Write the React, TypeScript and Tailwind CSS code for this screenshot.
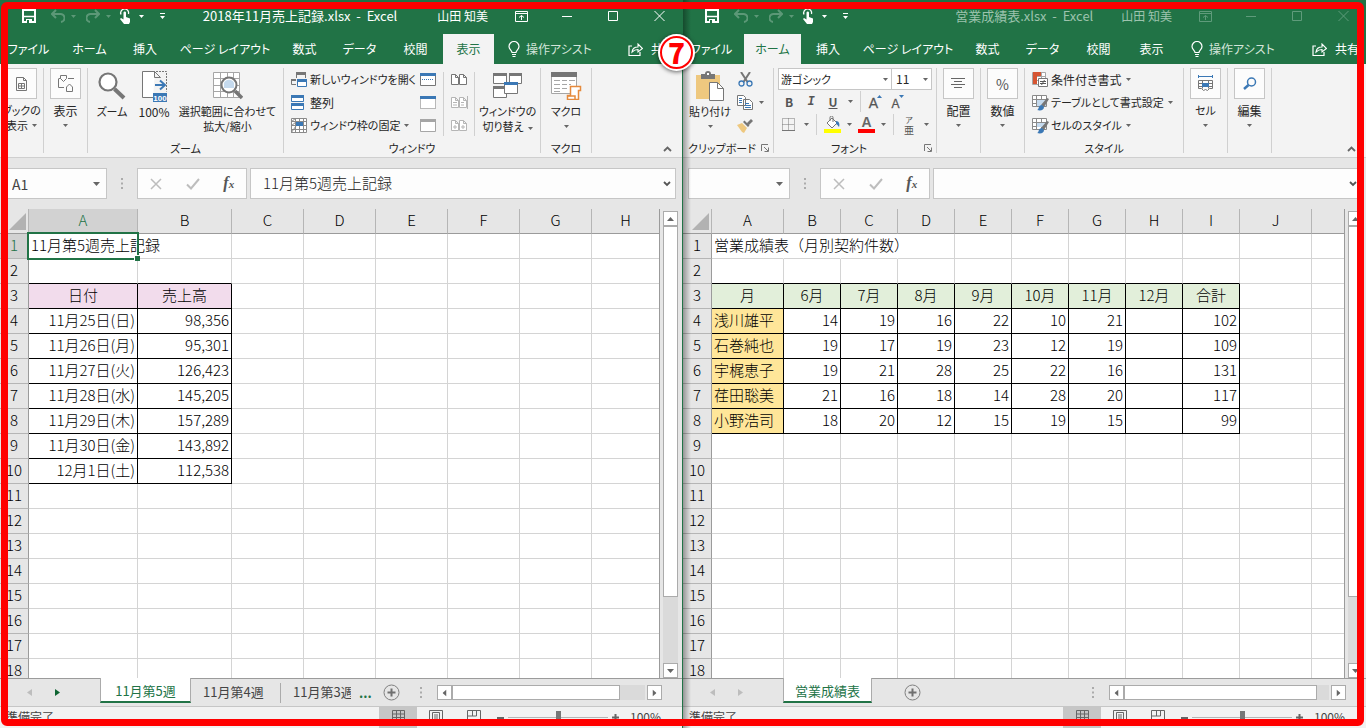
import { useState, type ReactNode } from 'react';
import clsx from 'clsx';

// ---------- data ----------

type Cell = { text: string; className: string };

type SheetData = {
  id: string;
  columns: { name: string; width: string }[];
  title: string;
  titleSpan: number;
  head: string[];
  headColor: string;
  rows: string[][];
  firstColor: string;
  firstAlign: string;
  selected: boolean;
};

const TOTAL_ROWS = 18;

const salesSheet: SheetData = {
  id: 'sales',
  columns: [
    { name: 'A', width: 'w-[109px]' },
    { name: 'B', width: 'w-[94px]' },
    { name: 'C', width: 'w-[72px]' },
    { name: 'D', width: 'w-[72px]' },
    { name: 'E', width: 'w-[72px]' },
    { name: 'F', width: 'w-[72px]' },
    { name: 'G', width: 'w-[72px]' },
    { name: 'H', width: '' },
  ],
  title: '11月第5週売上記録',
  titleSpan: 2,
  head: ['日付', '売上高'],
  headColor: 'bg-[#f2dcec]',
  rows: [
    ['11月25日(日)', '98,356'],
    ['11月26日(月)', '95,301'],
    ['11月27日(火)', '126,423'],
    ['11月28日(水)', '145,205'],
    ['11月29日(木)', '157,289'],
    ['11月30日(金)', '143,892'],
    ['12月1日(土)', '112,538'],
  ],
  firstColor: 'bg-white',
  firstAlign: 'text-right',
  selected: true,
};

const resultSheet: SheetData = {
  id: 'result',
  columns: [
    { name: 'A', width: 'w-[72px]' },
    { name: 'B', width: 'w-[57px]' },
    { name: 'C', width: 'w-[57px]' },
    { name: 'D', width: 'w-[57px]' },
    { name: 'E', width: 'w-[57px]' },
    { name: 'F', width: 'w-[57px]' },
    { name: 'G', width: 'w-[57px]' },
    { name: 'H', width: 'w-[57px]' },
    { name: 'I', width: 'w-[57px]' },
    { name: 'J', width: 'w-[72px]' },
    { name: '', width: '' },
  ],
  title: '営業成績表（月別契約件数）',
  titleSpan: 4,
  head: ['月', '6月', '7月', '8月', '9月', '10月', '11月', '12月', '合計'],
  headColor: 'bg-[#e2efda]',
  rows: [
    ['浅川雄平', '14', '19', '16', '22', '10', '21', '', '102'],
    ['石巻純也', '19', '17', '19', '23', '12', '19', '', '109'],
    ['宇梶恵子', '19', '21', '28', '25', '22', '16', '', '131'],
    ['荏田聡美', '21', '16', '18', '14', '28', '20', '', '117'],
    ['小野浩司', '18', '20', '12', '15', '19', '15', '', '99'],
  ],
  firstColor: 'bg-[#ffe699]',
  firstAlign: 'text-left',
  selected: false,
};

const ribbonTabs = [
  { label: 'ファイル', width: 'w-[61px] pr-1' },
  { label: 'ホーム', width: 'w-[57px]' },
  { label: '挿入', width: 'w-[54px]' },
  { label: 'ページ レイアウト', width: 'w-[106px]' },
  { label: '数式', width: 'w-[53px]' },
  { label: 'データ', width: 'w-[57px]' },
  { label: '校閲', width: 'w-[55px]' },
  { label: '表示', width: 'w-[51px]' },
];

// ---------- icons ----------

function Svg({ w, h, children, className }: { w: number; h: number; children: ReactNode; className?: string }) {
  return (
    <svg width={w} height={h} viewBox={`0 0 ${w} ${h}`} fill="none" className={clsx('shrink-0', className)} aria-hidden="true">
      {children}
    </svg>
  );
}

const Caret = ({ className }: { className?: string }) => (
  <Svg w={5} h={3} className={clsx('inline-block', className)}>
    <path d="M0 0h5L2.5 3z" fill="currentColor" />
  </Svg>
);

const ScrollArrow = ({ className }: { className?: string }) => (
  <Svg w={7} h={4} className={className}>
    <path d="M0 0h7L3.5 4z" fill="#666" />
  </Svg>
);

const SaveIcon = () => (
  <Svg w={14} h={14}>
    <path d="M1 1h12v12H1z" stroke="#fff" strokeWidth="2" />
    <path d="M2 7.5h10" stroke="#fff" strokeWidth="1.5" />
    <path d="M4 10h6v3H4z" fill="#fff" />
    <path d="M5 11h2v3H5z" fill="#217346" />
  </Svg>
);

const UndoIcon = ({ flip }: { flip?: boolean }) => (
  <Svg w={14} h={14} className={flip ? '-scale-x-100' : ''}>
    <path d="M5 1L1 5l4 4M1.500 5H9a4 4 0 0 1 1 8" stroke="#5c9877" strokeWidth="2" />
  </Svg>
);

const TouchIcon = () => (
  <Svg w={12} h={16}>
    <path d="M2 6.500A4 4 0 1 1 9.500 6" stroke="#fff" strokeWidth="1.300" />
    <path d="M4.500 4.500a1.300 1.300 0 0 1 2.500 0V9l4 1.500V14l-1 2H5l-4-5 1-1 2.500 1.500z" fill="#fff" />
  </Svg>
);

const BulbIcon = () => (
  <Svg w={12} h={16}>
    <path d="M4 11.500C4 9.500 1 8.500 1 5.500a5 5 0 0 1 10 0c0 3-3 4-3 6zM4 13.500h4M4.500 15.500h3" stroke="#fff" strokeWidth="1.200" />
  </Svg>
);

const ShareIcon = () => (
  <Svg w={15} h={13}>
    <path d="M4 3H1v9.500h11V9" stroke="#fff" strokeWidth="1.200" />
    <path d="M4 9c.5-4 3-5 6-5V1l4.500 4.500L10 9V6.500C7.500 6.500 6 7 4 9z" stroke="#fff" strokeWidth="1.100" />
  </Svg>
);

const PageGridIcon = () => (
  <Svg w={11} h={14}>
    <path d="M.5.5h7l3 3v10H.5zM7.500.5v3h3" stroke="#767676" />
    <path d="M2.500 6.500h6v5h-6zM5.500 6.500v5M2.500 9h6" stroke="#767676" />
  </Svg>
);

const ShapesIcon = () => (
  <Svg w={16} h={17}>
    <path d="M2.500.5h6v3l-3 3-3-3zM10 3.500h6M8.500 12l3-3 3 3v4.500h-6z" stroke="#767676" />
    <path d="M.5 4v8.500H6M.5 3.500h2" stroke="#767676" />
  </Svg>
);

const MagnifierIcon = () => (
  <Svg w={28} h={28}>
    <circle cx="10" cy="10" r="8.500" stroke="#767676" strokeWidth="2.200" fill="#fff" />
    <path d="M16.500 17L26 26" stroke="#767676" strokeWidth="4" />
  </Svg>
);

const HundredIcon = () => (
  <Svg w={27} h={32}>
    <path d="M14 1.500H1.500v26H12" fill="#fff" stroke="#767676" />
    <path d="M13.500 1.500v6h6M13.500 1.500l6 6" stroke="#767676" />
    <path d="M15 1.500h10.500v20" stroke="#767676" strokeDasharray="2 1" />
    <path d="M14 15h9M19 10.500l5 4.500-5 4.500" stroke="#3b78b5" strokeWidth="2" />
    <path d="M12 23h14v9H12z" fill="#3b78b5" />
    <text x="19" y="30.500" fontSize="8" fontWeight="700" fill="#fff" textAnchor="middle" fontFamily="Liberation Sans, sans-serif">100</text>
  </Svg>
);

const ZoomSelectionIcon = () => (
  <Svg w={30} h={28}>
    <path d="M.5.5h26v25H.5zM.5 6.500h26M.5 13.500h26M.5 19.500h26M7.500.5v25M14.500.5v25M20.500.5v25" stroke="#a6a6a6" fill="#fff" />
    <circle cx="16" cy="13" r="7.500" fill="#fff" stroke="#767676" strokeWidth="2" />
    <path d="M11 11a5.500 5.500 0 0 1 10 0v5H11z" fill="#c5daee" />
    <path d="M22 19l7 7" stroke="#767676" strokeWidth="3.500" />
  </Svg>
);

const NewWindowIcon = () => (
  <Svg w={16} h={15}>
    <path d="M5 0h10v3H5zM0 7h5v2H0z" fill="#767676" />
    <path d="M5.500 2v4M14.500 2v4M.5 8v4.500H5" stroke="#767676" />
    <path d="M6.500 7.500h9v7h-9z" fill="#fff" stroke="#3b78b5" />
    <path d="M6 7h10v3H6z" fill="#3b78b5" />
  </Svg>
);

const ArrangeIcon = () => (
  <Svg w={14} h={15}>
    <path d="M.5.5h12v6H.5zM.5 8.500h12v6H.5z" fill="#fff" stroke="#3b78b5" />
    <path d="M0 0h13v3H0zM0 8h13v3H0z" fill="#3b78b5" />
  </Svg>
);

const FreezeIcon = () => (
  <Svg w={16} h={15}>
    <path d="M.5.5h15v14H.5zM.5 3.500h15M.5 7.500h15M.5 11.500h15M4.500.5v14M8.500.5v14M12.500.5v14" stroke="#8a8a8a" fill="#fff" />
    <path d="M5 4h7v4H5z" fill="#3b78b5" />
    <path d="M0 4l5-4M0 8l5-4M0 15l5-7" stroke="#8a8a8a" />
  </Svg>
);

const PaneIcon = ({ kind }: { kind: 'split' | 'hide' | 'show' }) => (
  <Svg w={16} h={13}>
    <path
      d="M.5.5h15v12H.5z"
      fill="#fff"
      stroke={kind === 'show' ? '#a6a6a6' : '#767676'}
      strokeDasharray={kind === 'hide' ? '1 1' : undefined}
    />
    <path d="M0 0h16v3H0z" fill={kind === 'show' ? '#a6a6a6' : '#3b78b5'} />
    {kind === 'split' && <path d="M2 6.500h12" stroke="#3b78b5" strokeDasharray="1 1" />}
  </Svg>
);

const PagesIcon = ({ kind }: { kind: 'compare' | 'sync' | 'reset' }) => (
  <Svg w={17} h={13}>
    <g stroke={kind === 'compare' ? '#767676' : '#b5b5b5'}>
      <path d="M.5 1.500h4l3 3v7h-7zM4.500 1.500v3h3M8.500 1.500h4l3 3v7h-7zM12.500 1.500v3h3" fill="#fff" />
      {kind === 'sync' && <path d="M2 6.500h4M2 9h4M10 6.500h3M10 9h3M16.500 0v13" />}
      {kind === 'reset' && <path d="M2 8h4M4 6v4M10 8h4M12 6v4" />}
    </g>
  </Svg>
);

const SwitchWindowIcon = () => (
  <Svg w={30} h={26}>
    <path d="M.5.5h13v10H.5zM16.500.5h12v10h-12zM.5 13.500h13v11H.5z" fill="#fff" stroke="#767676" />
    <path d="M0 0h14v3H0zM16 0h13v3H16zM0 13h14v3H0z" fill="#767676" />
    <path d="M11.500 9.500h13v11h-13z" fill="#fff" stroke="#767676" />
    <path d="M11 9h14v3H11z" fill="#3b78b5" />
  </Svg>
);

const MacroIcon = () => (
  <Svg w={31} h={28}>
    <path d="M.5.5h25v21H.5z" fill="#fff" stroke="#a6a6a6" />
    <path d="M0 0h26v5H0z" fill="#767676" />
    <path d="M3 8.500h6M3 12.500h6M3 16.500h6M3 19.500h6M11 8.500h5M11 12.500h5M11 16.500h5M18 8.500h6M18 12.500h2" stroke="#a6a6a6" />
    <path d="M19.500 14.500h10v4h-2v9h-11v-4h3z" fill="#fff" stroke="#e58a3c" strokeWidth="1.500" />
    <path d="M17 24h7v3" stroke="#e58a3c" strokeWidth="1.500" />
  </Svg>
);

const PasteIcon = () => (
  <Svg w={28} h={30}>
    <path d="M0 4h24v24H0z" fill="#eec87f" />
    <path d="M5 3h4a3 3 0 0 1 6 0h4v5H5z" fill="#767676" />
    <path d="M11 2h2v2h-2z" fill="#fff" />
    <path d="M13.500 11.500h8l6 6v12h-14z" fill="#fff" stroke="#767676" />
    <path d="M21.500 11.500v6h6" stroke="#767676" />
  </Svg>
);

const ScissorsIcon = () => (
  <Svg w={15} h={15}>
    <path d="M3 0l6.500 10M12 0L5.500 10" stroke="#767676" strokeWidth="2" />
    <circle cx="3.500" cy="11.500" r="2.500" stroke="#3b78b5" strokeWidth="1.300" />
    <circle cx="11.500" cy="11.500" r="2.500" stroke="#3b78b5" strokeWidth="1.300" />
  </Svg>
);

const CopyIcon = () => (
  <Svg w={16} h={15}>
    <path d="M.5.5h6l2 2v8h-8zM6.500 4.500h6l3 3v7h-9z" fill="#fff" stroke="#767676" />
    <path d="M2 3.500h3M2 5.500h3M2 7.500h3M8 8.500h4M8 10.500h6M8 12.500h6" stroke="#3b78b5" />
  </Svg>
);

const BrushIcon = () => (
  <Svg w={16} h={14}>
    <path d="M0 6l5-2 5 5-3 5-2-1z" fill="#eec87f" />
    <path d="M6 3l5 5 1.500-1.500-5-5zM10 4l4-4 2 2-4 4z" fill="#767676" />
  </Svg>
);

const BordersIcon = () => (
  <Svg w={14} h={14}>
    <path d="M.5.5h12v12H.5zM.5 6.500h12M6.500.5v12" stroke="#767676" strokeDasharray="1 1" />
    <path d="M0 12.500h13" stroke="#767676" />
  </Svg>
);

const FillIcon = () => (
  <Svg w={17} h={17}>
    <path d="M3 7l5-5 5 5-5 5z" fill="#fff" stroke="#767676" />
    <path d="M6 5V1.500a1 1 0 0 1 3 0V6" stroke="#767676" />
    <path d="M12 5c3 0 4 3 3 6-1-1-1-2-3-3z" fill="#3b78b5" />
    <path d="M0 13h17v4H0z" fill="#ff0" />
  </Svg>
);

const FontColorIcon = () => (
  <Svg w={17} h={17}>
    <text x="8.500" y="11" fontSize="14" fontWeight="700" fill="#666" textAnchor="middle" fontFamily="Liberation Sans, sans-serif">A</text>
    <path d="M0 13h17v4H0z" fill="#f00" />
  </Svg>
);

const FontSizeIcon = ({ up }: { up?: boolean }) => (
  <Svg w={16} h={16}>
    <text x="5.500" y="14" fontSize={up ? 14 : 12} fill="#555" stroke="#555" strokeWidth=".3" textAnchor="middle" fontFamily="Liberation Sans, sans-serif">A</text>
    <path d={up ? 'M9 4l2.500-3L14 4z' : 'M9 1h5l-2.500 3z'} fill="#3b78b5" />
  </Svg>
);

const AlignIcon = () => (
  <Svg w={15} h={13}>
    <path d="M0 1.500h14M3 4.500h8M0 7.500h14M3 10.500h8" stroke="#666" />
  </Svg>
);

const ConditionalIcon = () => (
  <Svg w={17} h={16}>
    <path d="M.5.5h13v12H.5zM.5 4.500h13M.5 8.500h13M4.500.5v12M9.500.5v12" stroke="#a6a6a6" fill="#fff" />
    <path d="M1 0h8v4H1zM1 4h4v4H1zM1 8h4v4H1z" fill="#d65532" />
    <path d="M6.500 6.500h9v8h-9z" fill="#fff" stroke="#767676" />
    <path d="M8 9.500h6M8 11.500h6M9.500 13l3-5" stroke="#555" />
  </Svg>
);

const StyleIcon = ({ cell }: { cell?: boolean }) => (
  <Svg w={17} h={16}>
    <path d="M.5.5h14v11H.5zM.5 4.500h14M.5 8.500h14M4.500.5v11M9.500.5v11" stroke="#8a8a8a" fill="#fff" />
    <path d={cell ? 'M5 5h9v4H5z' : 'M5 5h9v6H5z'} fill="#c5daee" />
    <path d="M9 10l6-7 2 1-5 8z" fill="#767676" />
    <path d="M5 15c2 0 1-5 5-5l2 2c0 3-3 4-7 3z" fill="#3b78b5" />
  </Svg>
);

const CellsIcon = () => (
  <Svg w={15} h={17}>
    <path d="M1 1.500h13M.5 0v3M14.500 0v3" stroke="#3b78b5" />
    <path d="M.5 5.500h14v8h-3l-2 2-2-1-2 1-2-2h-3zM.5 8.500h14M.5 11.500h14M4.500 5.500v8M10.500 5.500v8" stroke="#767676" />
    <path d="M4 8h7v4H4z" fill="#3b78b5" />
  </Svg>
);

const FindIcon = () => (
  <Svg w={14} h={13}>
    <circle cx="8.500" cy="5" r="4" stroke="#3b78b5" strokeWidth="1.500" />
    <path d="M5.500 8L1 12" stroke="#3b78b5" strokeWidth="2.500" />
  </Svg>
);

// ---------- ribbon parts ----------

const Sep = ({ className = 'mb-[3px]' }: { className?: string }) => (
  <div className={clsx('w-px shrink-0 self-stretch bg-[#d0d0d0]', className)} />
);

function Group({ label, launcher, className, children }: { label?: string; launcher?: boolean; className?: string; children: ReactNode }) {
  return (
    <div className={clsx('flex shrink-0 flex-col', className)}>
      <div className="flex flex-1">{children}</div>
      <div className="flex h-4 items-center">
        <span className="flex-1 text-center">{label}</span>
        {launcher && (
          <button aria-label={`${label}の設定`} className="pr-1">
            <Svg w={8} h={8}>
              <path d="M.5 7V.5H7M3 3l4 4M7.500 3.500v4h-4" stroke="#777" />
            </Svg>
          </button>
        )}
      </div>
    </div>
  );
}

function BigButton({ icon, lines, caret, className }: { icon: ReactNode; lines: string[]; caret?: boolean; className?: string }) {
  return (
    <button className={clsx('flex flex-col items-center self-start leading-[15px] whitespace-nowrap', className)}>
      <span className="flex h-9 items-center justify-center">{icon}</span>
      {lines.map((line, i) => (
        <span key={line}>
          {line}
          {caret && i === 1 && <Caret className="ml-1 align-middle text-[#666]" />}
        </span>
      ))}
      {caret && lines.length === 1 && (
        <span className="flex h-[15px] items-center text-[#666]">
          <Caret />
        </span>
      )}
    </button>
  );
}

function BoxButton({ icon, lines, className = 'text-xs' }: { icon: ReactNode; lines: string[]; className?: string }) {
  return (
    <button className={clsx('flex w-[43px] shrink-0 flex-col items-center self-start whitespace-nowrap', className)}>
      <span className="mb-1 flex h-[31px] w-[31px] items-center justify-center border border-[#c6c6c6] bg-[#fcfcfc]">{icon}</span>
      <span className="leading-[15px]">{lines[0]}</span>
      <span className="flex h-[15px] items-center gap-1 leading-[15px]">
        {lines[1]}
        <Caret className="text-[#666]" />
      </span>
    </button>
  );
}

function RowButton({ icon, label, caret, className }: { icon: ReactNode; label: string; caret?: boolean; className?: string }) {
  return (
    <button className={clsx('flex h-[23px] items-center gap-0.5 whitespace-nowrap', className)}>
      <span className="flex w-[17px]">{icon}</span>
      {label}
      {caret && <Caret className="ml-0.5 text-[#666]" />}
    </button>
  );
}

function Tool({ label, caret, className, children }: { label: string; caret?: boolean; className?: string; children?: ReactNode }) {
  return (
    <button aria-label={label} className={clsx('flex h-[23px] items-center justify-center text-[#555]', className)}>
      {caret ? <Caret className="text-[#666]" /> : children}
    </button>
  );
}

function ViewRibbon() {
  return (
    <>
      <BoxButton icon={<PageGridIcon />} lines={['ブックの', '表示']} className="text-[11px]" />
      <Sep />
      <BoxButton icon={<ShapesIcon />} lines={['表示']} />
      <Sep />
      <Group label="ズーム" className="w-[195px]">
        <BigButton icon={<MagnifierIcon />} lines={['ズーム']} className="w-12" />
        <BigButton icon={<HundredIcon />} lines={['100%']} className="w-9 text-xs" />
        <BigButton icon={<ZoomSelectionIcon />} lines={['選択範囲に合わせて', '拡大/縮小']} className="w-[111px]" />
      </Group>
      <Sep />
      <Group label="ウィンドウ" className="w-[256px]">
        <div className="flex w-[136px] shrink-0 flex-col pl-[7px]">
          <RowButton icon={<NewWindowIcon />} label="新しいウィンドウを開く" />
          <RowButton icon={<ArrangeIcon />} label="整列" className="text-xs" />
          <RowButton icon={<FreezeIcon />} label="ウィンドウ枠の固定" caret />
        </div>
        <div className="w-[23px]">
          <Tool label="分割"><PaneIcon kind="split" /></Tool>
          <Tool label="表示しない"><PaneIcon kind="hide" /></Tool>
          <Tool label="再表示"><PaneIcon kind="show" /></Tool>
        </div>
        <Sep className="my-1" />
        <div className="w-[30px] pl-[7px]">
          <Tool label="並べて比較"><PagesIcon kind="compare" /></Tool>
          <Tool label="同時にスクロール"><PagesIcon kind="sync" /></Tool>
          <Tool label="位置を元に戻す"><PagesIcon kind="reset" /></Tool>
        </div>
        <Sep className="my-1" />
        <BigButton icon={<SwitchWindowIcon />} lines={['ウィンドウの', '切り替え']} caret className="w-[65px]" />
      </Group>
      <Sep />
      <Group label="マクロ" className="w-[50px]">
        <BigButton icon={<MacroIcon />} lines={['マクロ']} caret className="w-[50px]" />
      </Group>
      <Sep />
    </>
  );
}

function HomeRibbon() {
  return (
    <>
      <Group label="クリップボード" launcher className="w-[90px]">
        <BigButton icon={<PasteIcon />} lines={['貼り付け']} caret className="w-[54px]" />
        <div>
          <Tool label="切り取り" className="w-4"><ScissorsIcon /></Tool>
          <div className="flex">
            <Tool label="コピー" className="w-4"><CopyIcon /></Tool>
            <Tool label="コピーのオプション" caret className="w-4" />
          </div>
          <Tool label="書式のコピー" className="w-4"><BrushIcon /></Tool>
        </div>
      </Group>
      <Sep />
      <Group label="フォント" launcher className="w-[162px]">
        <div className="flex flex-col pl-1">
          <div className="flex">
            <label className="relative flex w-[114px] items-center">
              <select aria-label="フォント名" className="h-[22px] w-full appearance-none border border-[#c6c6c6] bg-white pl-0.5">
                <option>游ゴシック</option>
              </select>
              <Caret className="pointer-events-none absolute right-1 text-[#666]" />
            </label>
            <label className="relative flex w-10 items-center">
              <select aria-label="フォント サイズ" className="h-[22px] w-full appearance-none border border-l-0 border-[#c6c6c6] bg-white pl-1 text-xs">
                <option>11</option>
              </select>
              <Caret className="pointer-events-none absolute right-1 text-[#666]" />
            </label>
          </div>
          <div className="flex text-xs">
            <Tool label="太字" className="w-[22px] font-bold">B</Tool>
            <Tool label="斜体" className="w-[22px] font-['Liberation_Mono',monospace] font-bold italic">I</Tool>
            <Tool label="下線" className="w-[22px] font-bold underline">U</Tool>
            <Tool label="下線の種類" caret className="mr-1 w-3" />
            <Sep className="my-px" />
            <Tool label="フォント サイズの拡大" className="ml-1 w-[22px]"><FontSizeIcon up /></Tool>
            <Tool label="フォント サイズの縮小" className="w-[22px]"><FontSizeIcon /></Tool>
          </div>
          <div className="flex">
            <Tool label="罫線" className="w-[22px]"><BordersIcon /></Tool>
            <Tool label="罫線の種類" caret className="mr-1 w-3" />
            <Sep className="my-px" />
            <Tool label="塗りつぶしの色" className="ml-1 w-[22px]"><FillIcon /></Tool>
            <Tool label="塗りつぶしの色の選択" caret className="w-3" />
            <Tool label="フォントの色" className="w-[22px]"><FontColorIcon /></Tool>
            <Tool label="フォントの色の選択" caret className="mr-1 w-3" />
            <Sep className="my-px" />
            <Tool label="ふりがなの表示" className="ml-1 w-[22px] flex-col">
              <span className="text-[8px] leading-[10px]">ア</span>
              <span className="text-[10px] leading-[10px]">亜</span>
            </Tool>
            <Tool label="ふりがなのオプション" caret className="w-3" />
          </div>
        </div>
      </Group>
      <Sep />
      <BoxButton icon={<AlignIcon />} lines={['配置']} />
      <Sep />
      <BoxButton icon={<span className="text-sm text-[#555]">%</span>} lines={['数値']} />
      <Sep />
      <Group label="スタイル" className="w-[158px]">
        <div className="flex flex-col pl-[7px]">
          <RowButton icon={<ConditionalIcon />} label="条件付き書式" caret className="text-xs" />
          <RowButton icon={<StyleIcon />} label="テーブルとして書式設定" caret />
          <RowButton icon={<StyleIcon cell />} label="セルのスタイル" caret />
        </div>
      </Group>
      <Sep />
      <BoxButton icon={<CellsIcon />} lines={['セル']} className="text-[11px]" />
      <Sep />
      <BoxButton icon={<FindIcon />} lines={['編集']} />
      <Sep />
    </>
  );
}

// ---------- sheet ----------

function getCell(sheet: SheetData, row: number, col: number): Cell {
  const last = 3 + sheet.rows.length;
  const inTable = col < sheet.head.length;
  if (row === 1) {
    // the title runs over its neighbours, so no line is drawn between them
    const covered = col < sheet.titleSpan - 1;
    return {
      text: col === 0 ? sheet.title : '',
      className: clsx('border-b-[#d4d4d4]', covered ? 'border-r-transparent' : 'border-r-[#d4d4d4]'),
    };
  }
  if (row === 2 && inTable) return { text: '', className: 'border-r-[#d4d4d4] border-b-black' };
  if (row === 3 && inTable) return { text: sheet.head[col], className: clsx('border-black text-center', sheet.headColor) };
  if (row > 3 && row <= last && inTable) {
    return {
      text: sheet.rows[row - 4][col],
      className: clsx('border-black', col === 0 ? clsx(sheet.firstColor, sheet.firstAlign) : 'text-right'),
    };
  }
  return { text: '', className: 'border-[#d4d4d4]' };
}

function SheetGrid({ sheet }: { sheet: SheetData }) {
  const rows = Array.from({ length: TOTAL_ROWS }, (_, i) => i + 1);
  return (
    <div className="min-w-0 flex-1 overflow-hidden border-r border-[#9b9b9b] bg-white">
      <table className="w-full table-fixed border-separate border-spacing-0 text-[15px] leading-[22px] font-light text-black [font-feature-settings:normal]">
        <colgroup>
          <col className="w-[29px]" />
          {sheet.columns.map((c, i) => (
            <col key={i} className={c.width} />
          ))}
        </colgroup>
        <thead>
          <tr className="h-[25px] bg-[#e6e6e6]">
            <th className="border-r border-b border-r-[#b5b5b5] border-b-[#9b9b9b] p-0 pr-0.5">
              <Svg w={17} h={17} className="ml-auto">
                <path d="M17 0v17H0z" fill="#b2b2b2" />
              </Svg>
            </th>
            {sheet.columns.map((c, i) => (
              <th
                key={i}
                scope="col"
                className={clsx(
                  'border-b border-r-[#b5b5b5] border-b-[#9b9b9b] p-0 align-top font-light',
                  i < sheet.columns.length - 1 && 'border-r',
                  sheet.selected && i === 0 && 'bg-[#d2d2d2] text-[#217346]',
                )}
              >
                {c.name}
              </th>
            ))}
          </tr>
        </thead>
        <tbody>
          {rows.map((row) => (
            <tr key={row} className="h-[25px]">
              <th
                scope="row"
                className={clsx(
                  'border-r border-b border-r-[#9b9b9b] border-b-[#b5b5b5] p-0 align-top font-light',
                  sheet.selected && row === 1 ? 'bg-[#d2d2d2] text-[#217346]' : 'bg-[#e6e6e6]',
                )}
              >
                {row}
              </th>
              {sheet.columns.map((_, col) => {
                const cell = getCell(sheet, row, col);
                const active = sheet.selected && row === 1 && col === 0;
                return (
                  <td
                    key={col}
                    className={clsx(
                      'border-b p-0 px-0.5 align-top whitespace-nowrap',
                      active && 'relative',
                      col < sheet.columns.length - 1 && 'border-r',
                      cell.className,
                    )}
                  >
                    {cell.text}
                    {active && (
                      <span className="absolute -inset-0.5 border-2 border-[#217346]">
                        <span className="absolute -right-[3px] -bottom-[3px] h-1.5 w-1.5 border-t border-l border-white bg-[#217346]" />
                      </span>
                    )}
                  </td>
                );
              })}
            </tr>
          ))}
        </tbody>
      </table>
    </div>
  );
}

const scrollButton = 'flex h-[15px] w-[15px] shrink-0 items-center justify-center border border-[#ababab] bg-white';

function VerticalScroll({ width }: { width: string }) {
  return (
    <div className={clsx('flex shrink-0 flex-col bg-[#e6e6e6] pt-0.5 pl-[3px]', width)}>
      <button aria-label="上へスクロール" className={scrollButton}>
        <ScrollArrow className="rotate-180" />
      </button>
      <div className="flex w-[15px] flex-1 flex-col bg-[#dadada]">
        <div className="h-[85%] border border-[#ababab] bg-white" />
      </div>
      <button aria-label="下へスクロール" className={scrollButton}>
        <ScrollArrow />
      </button>
    </div>
  );
}

function HorizontalScroll({ width, thumb }: { width: string; thumb: string }) {
  return (
    <div className={clsx('mr-5 flex shrink-0', width)}>
      <button aria-label="左へスクロール" className={scrollButton}>
        <ScrollArrow className="rotate-90" />
      </button>
      <div className="mr-0.5 flex flex-1 bg-[#dadada]">
        <div className={clsx('border border-[#ababab] bg-white', thumb)} />
      </div>
      <button aria-label="右へスクロール" className={scrollButton}>
        <ScrollArrow className="-rotate-90" />
      </button>
    </div>
  );
}

const Dots = () => (
  <Svg w={2} h={11}>
    <path d="M0 0h2v2H0zM0 4.500h2v2H0zM0 9h2v2H0z" fill="#ababab" />
  </Svg>
);

function FormulaBar({ name, formula, className }: { name: string; formula: string; className: string }) {
  const [value, setValue] = useState(formula);
  return (
    <div className={clsx('flex h-[51px] shrink-0 bg-[#e6e6e6] pt-2.5 pb-2.5 pl-[5px]', className)}>
      <div className="flex w-[102px] shrink-0 items-center border border-[#c6c6c6] bg-[#fdfdfd] pr-1.5">
        <input aria-label="名前ボックス" defaultValue={name} className="w-full min-w-0 bg-transparent pl-1.5 text-sm text-[#444] outline-none" />
        <button aria-label="名前の一覧">
          <ScrollArrow />
        </button>
      </div>
      <div className="flex w-[30px] shrink-0 items-center justify-center"><Dots /></div>
      <div className="mr-[3px] flex w-[110px] shrink-0 items-center justify-around border border-[#c6c6c6] bg-[#fdfdfd]">
        <button aria-label="キャンセル">
          <Svg w={12} h={12}><path d="M1 1l10 10M11 1L1 11" stroke="#bdbdbd" strokeWidth="1.500" /></Svg>
        </button>
        <button aria-label="入力">
          <Svg w={14} h={12}><path d="M1 6.500L5 10.500 13 1" stroke="#bdbdbd" strokeWidth="2" /></Svg>
        </button>
        <button aria-label="関数の挿入" className="font-['Liberation_Serif',serif] text-base leading-4 font-bold text-[#555] italic">
          f<span className="text-[11px]">x</span>
        </button>
      </div>
      <div className="flex min-w-0 flex-1 items-center border border-[#c6c6c6] bg-[#fdfdfd] pr-1">
        <input
          aria-label="数式バー"
          value={value}
          onChange={(e) => setValue(e.target.value)}
          className="min-w-0 flex-1 bg-transparent pb-0.5 pl-3 text-[15px] font-light text-[#222] outline-none"
        />
        <button aria-label="数式バーの展開">
          <Svg w={8} h={6}><path d="M1 1l3 3 3-3" stroke="#555" strokeWidth="1.800" /></Svg>
        </button>
      </div>
    </div>
  );
}

function StatusBar() {
  return (
    <div className="flex h-[22px] shrink-0 border-t border-[#c6c6c6] bg-[#f2f2f2] pl-1.5 text-[#444]">
      <span className="flex-1 leading-5">準備完了</span>
      <button aria-label="標準" className="flex w-[38px] justify-center bg-[#c6c6c6] pt-[3px]">
        <Svg w={13} h={12}><path d="M.5.5h12v10H.5zM.5 4h12M.5 7.500h12M4.500.5v10M8.500.5v10" stroke="#666" /></Svg>
      </button>
      <button aria-label="ページ レイアウト" className="flex w-[38px] justify-center pt-[3px]">
        <Svg w={14} h={12}><path d="M.5.5h13v11H.5zM3.500 2.500h7v9h-7zM5 5h4M5 7h4M5 9h4" stroke="#666" /></Svg>
      </button>
      <button aria-label="改ページ プレビュー" className="flex w-[38px] justify-center pt-[3px]">
        <Svg w={14} h={12}><path d="M.5.5h13v11H.5zM5.500.5V6M9.500.5V6M.5 6h9" stroke="#666" /></Svg>
      </button>
      <button aria-label="縮小" className="flex w-[15px] items-center justify-center">
        <Svg w={7} h={2}><path d="M0 0h7v2H0z" fill="#666" /></Svg>
      </button>
      <input
        type="range"
        aria-label="ズーム"
        defaultValue={50}
        className="h-5 w-[100px] appearance-none bg-[linear-gradient(#b5b5b5,#b5b5b5)] bg-[length:100%_1px] bg-center bg-no-repeat [&::-webkit-slider-thumb]:h-3 [&::-webkit-slider-thumb]:w-[5px] [&::-webkit-slider-thumb]:appearance-none [&::-webkit-slider-thumb]:bg-[#777]"
      />
      <button aria-label="拡大" className="flex w-[15px] items-center justify-center">
        <Svg w={7} h={7}><path d="M0 3.500h7M3.500 0v7" stroke="#666" strokeWidth="2" /></Svg>
      </button>
      <span className="w-[59px] pl-[7px] leading-5">100%</span>
    </div>
  );
}

// ---------- window ----------

type ExcelWindowProps = {
  file: string;
  active: boolean;
  tab: string;
  ribbon: ReactNode;
  cellName: string;
  formula: string;
  formulaPad: string;
  sheet: SheetData;
  sheetTabs: string[];
  tabWidth: string;
  railWidth: string;
  scrollWidth: string;
  scrollThumb: string;
};

function ExcelWindow(p: ExcelWindowProps) {
  const dim = p.active ? 'text-white' : 'text-[#9dc3ae]';
  return (
    <section className="relative flex min-w-0 flex-1 flex-col">
      {/* Title bar */}
      <header className="flex h-[34px] shrink-0 items-center bg-[#217346] pb-0.5 text-white [font-feature-settings:normal]">
        <div className="flex shrink-0 items-center pl-[22px]">
          <button aria-label="上書き保存" className="mr-[15px]"><SaveIcon /></button>
          <button aria-label="元に戻す" className="flex items-center gap-1.5 text-[#5c9877]"><UndoIcon /><Caret /></button>
          <button aria-label="やり直し" className="ml-2.5 flex items-center gap-1.5 text-[#5c9877]"><UndoIcon flip /><Caret /></button>
          <button aria-label="タッチ/マウス モードの切り替え" className="ml-2 flex items-center gap-2"><TouchIcon /><Caret /></button>
          <button aria-label="クイック アクセス ツール バーのユーザー設定" className="ml-4">
            <Svg w={5} h={6}><path d="M0 0h5v1H0zM0 3h5L2.500 6z" fill="#fff" /></Svg>
          </button>
        </div>
        <h1 className={clsx('min-w-0 flex-1 truncate text-right text-[13px]', p.active ? 'pr-10' : 'pr-7', dim)}>{p.file}&nbsp; -&nbsp; Excel</h1>
        <span className={clsx('mr-2.5 shrink-0', dim)}>山田 知美</span>
        <div className={clsx('flex', p.active ? 'text-white' : 'text-[#5f9b7b]')}>
          <button aria-label="リボンの表示オプション" className="flex w-[46px] justify-center">
            <Svg w={13} h={11}><path d="M.5.5h12v10H.5zM.5 2.500h12M6.500 9V4.500M4 6.500l2.500-2 2.500 2" stroke="currentColor" /></Svg>
          </button>
          <button aria-label="最小化" className="flex w-[46px] items-center justify-center">
            <Svg w={10} h={1}><path d="M0 .5h10" stroke="currentColor" /></Svg>
          </button>
          <button aria-label="最大化" className="flex w-[46px] justify-center">
            <Svg w={10} h={10}><path d="M.5.5h9v9h-9z" stroke="currentColor" /></Svg>
          </button>
          <button aria-label="閉じる" className="flex w-[46px] justify-center">
            <Svg w={11} h={10}><path d="M.5 0l10 10M10.500 0l-10 10" stroke="currentColor" /></Svg>
          </button>
        </div>
      </header>

      {/* Ribbon tabs */}
      <nav className="flex h-[30px] shrink-0 bg-[#217346] text-white">
        {ribbonTabs.map((t) => (
          <button
            key={t.label}
            className={clsx('shrink-0 text-center whitespace-nowrap', t.width, p.tab === t.label && 'bg-[#f3f3f3] text-[#217346]')}
          >
            {t.label}
          </button>
        ))}
        <button className="ml-3.5 flex items-center gap-1.5 whitespace-nowrap text-[#d3e5da]"><BulbIcon />操作アシスト</button>
        <button className="mr-[7px] ml-auto flex items-center gap-2 whitespace-nowrap"><ShareIcon />共有</button>
      </nav>

      {/* Ribbon */}
      <div className="flex h-[94px] shrink-0 overflow-hidden border-b border-[#cfcfcf] bg-[#f3f3f3] pt-1 pb-px text-[11px]">
        {p.ribbon}
        <button aria-label="リボンを折りたたむ" className="mr-2.5 mb-1 ml-auto self-end">
          <Svg w={9} h={6}><path d="M1 5l3.500-3.500L8 5" stroke="#666" strokeWidth="1.800" /></Svg>
        </button>
      </div>

      <FormulaBar name={p.cellName} formula={p.formula} className={p.formulaPad} />

      <div className="flex min-h-0 flex-1">
        <SheetGrid sheet={p.sheet} />
        <VerticalScroll width={p.railWidth} />
      </div>

      {/* Sheet tabs */}
      <div className="flex h-7 shrink-0 items-center border-t border-[#9b9b9b] bg-[#e6e6e6] text-[13px] text-[#444]">
        <div className="flex h-full w-[100px] shrink-0 items-center gap-[23px] pl-[27px]">
          <button aria-label="前のシート" className="text-[#bdbdbd]">
            <Svg w={5} h={7}><path d="M5 0v7L0 3.500z" fill="currentColor" /></Svg>
          </button>
          <button aria-label="次のシート" className={p.active ? 'text-[#0e6532]' : 'text-[#bdbdbd]'}>
            <Svg w={5} h={7}><path d="M0 0v7l5-3.500z" fill="currentColor" /></Svg>
          </button>
        </div>
        {p.sheetTabs.map((name, i) =>
          i === 0 ? (
            <button
              key={name}
              className={clsx('-mt-px h-[25px] shrink-0 self-start border-x border-b-2 border-x-[#ababab] border-b-[#217346] bg-white pt-0.5 text-[#217346]', p.tabWidth)}
            >
              {name}
            </button>
          ) : (
            <button
              key={name}
              className={clsx('h-5 shrink-0 overflow-hidden pb-0.5 pl-3 text-left leading-[18px] whitespace-nowrap', i === 1 ? 'w-[90px] border-r border-[#ababab]' : 'w-[70px]')}
            >
              {name}
            </button>
          ),
        )}
        {p.sheetTabs.length > 1 && <span className="w-8 pl-2 font-bold text-[#217346]">...</span>}
        <button aria-label="新しいシート" className={p.sheetTabs.length > 1 ? '' : 'ml-8'}>
          <Svg w={17} h={17}>
            <circle cx="8.500" cy="8.500" r="7.500" stroke="#808080" />
            <path d="M4.500 8.500h8M8.500 4.500v8" stroke="#707070" strokeWidth="2" />
          </Svg>
        </button>
        <div className="mr-[15px] ml-auto"><Dots /></div>
        <HorizontalScroll width={p.scrollWidth} thumb={p.scrollThumb} />
      </div>

      <StatusBar />
    </section>
  );
}

export default function App() {
  return (
    <main className="relative flex h-screen overflow-hidden bg-[#e6e6e6] font-['Noto_Sans_CJK_JP',sans-serif] text-xs text-[#262626] [font-feature-settings:'palt']">
      <div className="flex w-1/2 border-r border-[#217346]">
        <ExcelWindow
          file="2018年11月売上記録.xlsx"
          active
          tab="表示"
          ribbon={<ViewRibbon />}
          cellName="A1"
          formula="11月第5週売上記録"
          formulaPad="pr-1.5"
          sheet={salesSheet}
          sheetTabs={['11月第5週', '11月第4週', '11月第3週']}
          tabWidth="w-[91px]"
          railWidth="w-[22px]"
          scrollWidth="w-[225px]"
          scrollThumb="w-[87%]"
        />
      </div>
      <div className="relative flex w-1/2">
        <ExcelWindow
          file="営業成績表.xlsx"
          active={false}
          tab="ホーム"
          ribbon={<HomeRibbon />}
          cellName=""
          formula=""
          formulaPad="pr-1"
          sheet={resultSheet}
          sheetTabs={['営業成績表']}
          tabWidth="w-[89px]"
          railWidth="w-[21px]"
          scrollWidth="w-[237px]"
          scrollThumb="w-[94%]"
        />
        <div className="pointer-events-none absolute inset-y-0 left-0 w-2 bg-linear-to-r from-black/35 to-transparent" />
      </div>

      {/* Callout frame with its step number */}
      <div className="pointer-events-none absolute top-0.5 right-0.5 bottom-0.5 left-px rounded-md border-7 border-[#ff0000]" />
      <div className="pointer-events-none absolute top-[34px] left-1/2 -ml-[25px] flex h-[37px] w-[37px] items-center justify-center rounded-full bg-white shadow-[0_1px_4px_rgba(0,0,0,0.6)]">
        <span className="flex h-[33px] w-[33px] items-center justify-center rounded-full border-2 border-[#ff0000] pb-0.5 text-[28px] leading-none font-black text-[#ff0000]">7</span>
      </div>
    </main>
  );
}
